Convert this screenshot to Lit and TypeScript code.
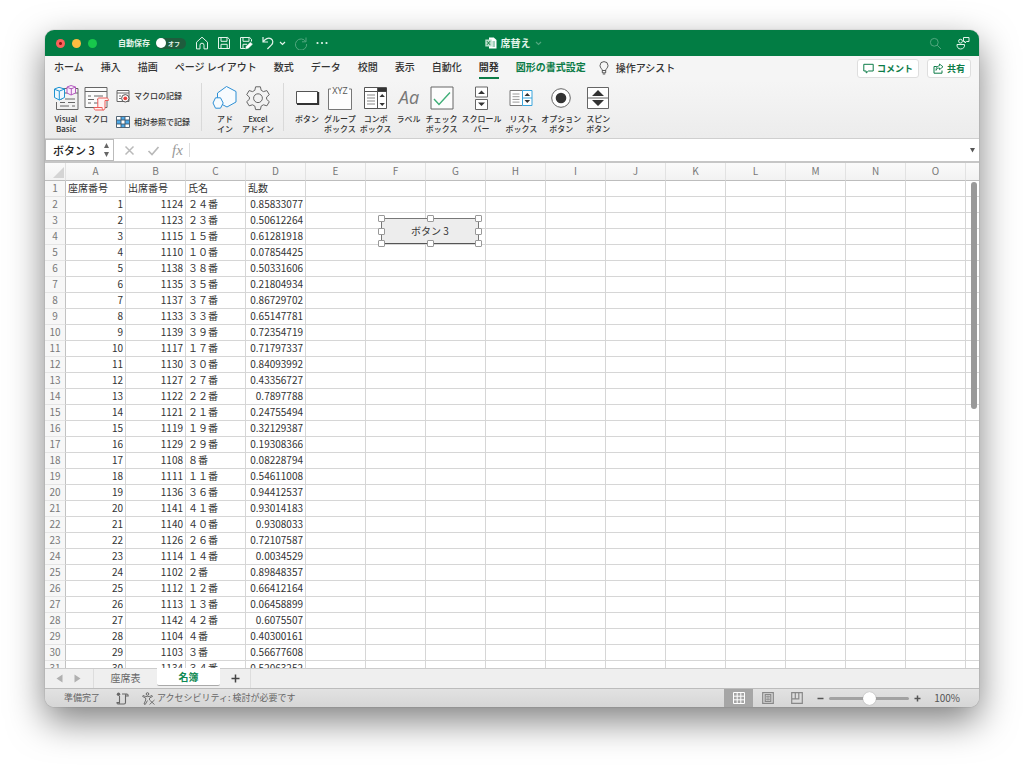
import { LitElement, html, css, svg, nothing } from "lit";
import { customElement, state } from "lit/decorators.js";
import { classMap } from "lit/directives/class-map.js";

const icon = (w: number, h: number, body: unknown) =>
  html`<svg class="icon" width=${w} height=${h} viewBox="0 0 ${w} ${h}" fill="none" stroke="currentColor" aria-hidden="true">${body}</svg>`;

const homeIcon = icon(14, 14, svg`<path d="M1.500 6.200 7 1.200l5.500 5V12.900H9V9.200a2 2 0 0 0-4 0v3.700H1.500Z" stroke-linejoin="round"/>`);
const saveIcon = icon(14, 14, svg`<path d="M1.500 1.500h9.200l1.800 1.800v9.200h-11ZM4 1.500v3.800h6V1.500M4 12.500V8.300h6.200v4.200"/>`);
const saveEditIcon = icon(14, 14, svg`<path d="M6 12.500H1.500v-11h9.200l1.800 1.800v2.200M4 1.500v3.800h6V1.500M4 12.500V8.300h4"/><path d="m6.500 13 .8-2.800 4.200-4 2 2-4.200 4Z" fill="#fff" stroke-width=".5"/>`);
const undoIcon = icon(14, 14, svg`<path d="M2 1v5h5M2.200 5.800C4 2.800 7.400 1.300 9.800 2.600c2.500 1.300 2.600 4.200.7 6.200L6.400 13" stroke-width="1.200"/>`);
const redoIcon = icon(14, 14, svg`<path d="M12 1.500v4.300H8M11.800 5.600A5.600 5.600 0 1 0 12.600 8"/>`);
const chevron = icon(7, 5, svg`<path d="m1 1 2.500 2.500L6 1" stroke-width="1.200"/>`);
const moreIcon = icon(12, 4, svg`<g fill="currentColor" stroke="none"><circle cx="1.500" cy="2" r="1.100"/><circle cx="6" cy="2" r="1.100"/><circle cx="10.500" cy="2" r="1.100"/></g>`);
const docIcon = icon(12, 12, svg`<path d="M4 .5h4.800L11.500 3v8.500H4Z" fill="#fff" stroke="none"/><path d="M7.500 5h2.500M7.500 7h2.500M7.500 9h2.500" stroke="#1a8a55" stroke-width=".8"/><rect x=".3" y="2.500" width="6.400" height="7" fill="#b9dfcb" stroke="none"/><path d="m2 4.200 3 3.600M5 4.200 2 7.800" stroke="#107c41"/>`);
const searchIcon = icon(13, 13, svg`<circle cx="5.300" cy="5.300" r="3.900"/><path d="m8.200 8.200 3.800 3.800"/>`);
const peopleIcon = icon(14, 14, svg`<circle cx="4.500" cy="5.200" r="1.900"/><path d="M1 8.500h7.500c.4 2.500-1.200 4.500-3.800 4.500S.800 11 1 8.500ZM7.500 1.500h5.500v4h-2.500L9 7V5.500H7.500Z" stroke-linejoin="round"/>`);
const bulbIcon = icon(10, 14, svg`<path d="M3.300 9.500C3.300 7.800 1 7 1 4.600a4 4 0 0 1 8 0C9 7 6.700 7.800 6.700 9.500ZM3.300 9.500v2.300h3.400V9.500M3.800 13h2.400" stroke-width=".8"/>`);
const commentIcon = icon(11, 11, svg`<path d="M.8 1.300h9.400v6.700H5.500L3.200 10V8H.8Z"/>`);
const shareIcon = icon(11, 11, svg`<path d="M3.800 3.500H1v6.700h8V7.500"/><path d="M6.500 1 10 3.800 6.500 6.600V5C4.800 5 3.700 5.800 3 7.400 3 4.600 4.400 2.900 6.500 2.700Z" stroke-linejoin="round" stroke-width=".9"/>`);

const vbIcon = icon(26, 26, svg`<path d="M7 3.500h18v21H3.500V17M12 8h13" stroke="#666"/><path d="M7 14h2m3 0h10M7 17.500h5m3 0h7M7 21h9m3 0h3" stroke="#666"/><path d="m14 2 4-1.500 4.500 1.500v6l-4.500 2-4-2ZM14 2.300l4.300 1.500L22.500 2M18.300 4v6" fill="#fbeefb" stroke="#b45bc0"/><path d="m1.500 4 4.500-1.700L11.500 4v8.500L6.300 15l-4.800-2.500ZM1.500 4.300l4.800 1.800 5.200-2M6.300 6.200V15" fill="#eef8fe" stroke="#1e93d2"/>`);
const macroIcon = icon(26, 26, svg`<path d="M2 2.500h22v20H2ZM2 6.500h22" fill="#fbfbfb" stroke="#666"/><path d="M5 11h3m3 0h9M5 14.500h6m3 0h3M5 18h3m3 0h4" stroke="#666"/><path d="M15.500 13h8.300c1.200 0 1.600.8 1.600 2.500H22v7.300c0 1.700-1 2.200-2 2.200h-7.500c-1 0-1.500-1-1.500-2.500h3.800v-7.800c0-1 .2-1.700.7-1.700ZM14.800 22.500h4.400c0 1.500.3 2.500 1.300 2.500" fill="#fff3f2" stroke="#ee5a57"/>`);
const recordIcon = icon(14, 14, svg`<path d="M1 1.500h12v11H1ZM1 4h12" fill="#fff" stroke="#666"/><path d="M3 7h2M3 9.500h2" stroke="#777"/><circle cx="9.300" cy="9.300" r="3.700" fill="#fff" stroke="#555"/><circle cx="9.300" cy="9.300" r="1.900" fill="#e8413d" stroke="none"/>`);
const relativeIcon = icon(14, 12, svg`<rect x=".5" y=".5" width="13" height="11" fill="#fff" stroke="none"/><path d="M5 1h4v3H5ZM1 4h4v4H1ZM9 4h4v4H9ZM5 8h4v3H5Z" fill="#4ba8e8" stroke="none"/><path d="M.5.500h13v11H.5ZM.5 4h13M.5 8h13M5 .5v11M9 .5v11" stroke="#3f5566" stroke-width=".9"/>`);
const addinIcon = icon(26, 26, svg`<g stroke="#2d8fd5" fill="#f7fbfe" stroke-linejoin="round"><path d="m14.500 1.500 9.500 5v10.500L15 22 5.500 17V8Z"/><path d="M8.500 12.800h-5L1 18l2.500 5.200h5L11.200 18Z"/></g>`);
const gearIcon = icon(26, 26, svg`<path d="m10.600 1.800h4.800l.8 3.500 2.200 1.300 3.500-1 2.400 4.100-2.700 2.400v2.200l2.700 2.400-2.400 4.100-3.500-1-2.200 1.300-.8 3.500h-4.800l-.8-3.500-2.200-1.300-3.500 1-2.400-4.100 2.700-2.400v-2.200L1.700 9.700l2.400-4.100 3.500 1 2.200-1.300Z" stroke="#666" stroke-linejoin="round"/><circle cx="13" cy="13.200" r="4.400" stroke="#666"/>`);
const buttonIcon = icon(26, 26, svg`<path d="M2.500 6.500h21v12h-21Z" fill="#fff" stroke="#555"/><path d="M3 19h21.200V7" stroke="#333" stroke-width="2"/>`);
const groupIcon = icon(26, 26, svg`<path d="M4 4H1.500v20.500h23V4H22" fill="#fdfdfd" stroke="#777"/><text x="13" y="8.500" text-anchor="middle" class="glyph">XYZ</text>`);
const comboIcon = icon(26, 26, svg`<path d="M1.500 2.500h22v21h-22ZM1.500 6.500h22M14.500 2.500v21" fill="#fff" stroke="#555"/><path d="M15 3h8.500v3.500H15Z" fill="#333" stroke="none"/><path d="M4 10h8M4 13h8M4 16h8M4 19h8" stroke="#888"/><path d="m16.500 12 2.700-3 2.700 3ZM16.500 18l2.700 3 2.700-3Z" fill="#333" stroke="none"/>`);
const labelIcon = icon(26, 26, svg`<text x="13" y="19" text-anchor="middle" class="glyph-label">Aa</text>`);
const checkIcon = icon(26, 26, svg`<path d="M2 2h22v22H2Z" fill="#fdfdfd" stroke="#666"/><path d="m5 14 5 5.500L21 7.500" stroke="#3fae77" stroke-width="1.400"/>`);
const scrollIcon = icon(26, 26, svg`<path d="M6.500 2h12v10h-12ZM6.500 14.500h12v10h-12Z" fill="#fff" stroke="#666"/><path d="m9 9 3.500-3.500L16 9ZM9 17.500l3.500 3.500 3.500-3.500Z" fill="#333" stroke="none"/>`);
const listIcon = icon(26, 26, svg`<path d="M2 5.500h12.500v15H2Z" fill="#fff" stroke="#777"/><path d="M4.500 9h7M4.500 11.700h7M4.500 14.400h7M4.500 17.100h7" stroke="#999"/><path d="M14.500 5.500h9.500v15h-9.500ZM14.500 13H24" fill="#fff" stroke="#3ba5dc"/><path d="m16.500 11 2.800-3 2.800 3ZM16.500 15l2.800 3 2.800-3Z" fill="#333" stroke="none"/>`);
const radioIcon = icon(26, 26, svg`<circle cx="13" cy="13" r="9.300" fill="#fff" stroke="#666"/><circle cx="13" cy="13" r="5.300" fill="#333" stroke="none"/>`);
const spinIcon = icon(26, 26, svg`<path d="M2.500 2.500h21v21h-21ZM2.500 13h21" fill="#fff" stroke="#666"/><path d="m7 11 6-6 6 6ZM7 15l6 6 6-6Z" fill="#333" stroke="none"/>`);

interface Tool { icon: unknown; lines: string[] }
const codeTools: Tool[] = [
  { icon: vbIcon, lines: ["Visual", "Basic"] },
  { icon: macroIcon, lines: ["マクロ"] },
];
const addinTools: Tool[] = [
  { icon: addinIcon, lines: ["アド", "イン"] },
  { icon: gearIcon, lines: ["Excel", "アドイン"] },
];
const controlTools: Tool[] = [
  { icon: buttonIcon, lines: ["ボタン"] },
  { icon: groupIcon, lines: ["グループ", "ボックス"] },
  { icon: comboIcon, lines: ["コンボ", "ボックス"] },
  { icon: labelIcon, lines: ["ラベル"] },
  { icon: checkIcon, lines: ["チェック", "ボックス"] },
  { icon: scrollIcon, lines: ["スクロール", "バー"] },
  { icon: listIcon, lines: ["リスト", "ボックス"] },
  { icon: radioIcon, lines: ["オプション", "ボタン"] },
  { icon: spinIcon, lines: ["スピン", "ボタン"] },
];

const ribbonTabs = ["ホーム", "挿入", "描画", "ページ レイアウト", "数式", "データ", "校閲", "表示", "自動化", "開発", "図形の書式設定"];
const columns = [..."ABCDEFGHIJKLMNO"];
const emptyColumns = columns.slice(4);

const roster: [number, string, string][] = [
  [1124, "２４番", "0.85833077"], [1123, "２３番", "0.50612264"], [1115, "１５番", "0.61281918"],
  [1110, "１０番", "0.07854425"], [1138, "３８番", "0.50331606"], [1135, "３５番", "0.21804934"],
  [1137, "３７番", "0.86729702"], [1133, "３３番", "0.65147781"], [1139, "３９番", "0.72354719"],
  [1117, "１７番", "0.71797337"], [1130, "３０番", "0.84093992"], [1127, "２７番", "0.43356727"],
  [1122, "２２番", "0.7897788"], [1121, "２１番", "0.24755494"], [1119, "１９番", "0.32129387"],
  [1129, "２９番", "0.19308366"], [1108, "８番", "0.08228794"], [1111, "１１番", "0.54611008"],
  [1136, "３６番", "0.94412537"], [1141, "４１番", "0.93014183"], [1140, "４０番", "0.9308033"],
  [1126, "２６番", "0.72107587"], [1114, "１４番", "0.0034529"], [1102, "２番", "0.89848357"],
  [1112, "１２番", "0.66412164"], [1113, "１３番", "0.06458899"], [1142, "４２番", "0.6075507"],
  [1104, "４番", "0.40300161"], [1103, "３番", "0.56677608"], [1134, "３４番", "0.52063252"],
];

@customElement("app-root")
export class AppRoot extends LitElement {
  @state() private activeTab = "開発";
  @state() private activeSheet = "名簿";

  static styles = css`
    :host {
      display: block;
      height: 100vh;
      box-sizing: border-box;
      padding: 30px 45px 59px;
      overflow: hidden;
      background: #fff;
      color: #333;
      font: 10px/16px "Noto Sans CJK JP", "Noto Sans", sans-serif;
    }
    * { box-sizing: border-box; }
    button, input {
      font: inherit;
      color: inherit;
      background: none;
      border: 0;
      padding: 0;
      margin: 0;
      border-radius: 0;
      white-space: nowrap;
    }
    .icon { display: block; flex: none; }
    .window {
      display: flex;
      flex-direction: column;
      height: 100%;
      border-radius: 9px;
      background: #f2f2f2;
      box-shadow: 0 0 1px rgba(0, 0, 0, 0.5), 0 14px 36px rgba(0, 0, 0, 0.5);
    }

    .titlebar {
      display: grid;
      grid-template-columns: 1fr auto 1fr;
      align-items: center;
      height: 26px;
      flex: none;
      padding: 0 9px 0 11px;
      border-radius: 9px 9px 0 0;
      background: #027d44;
      color: #e4f4eb;
    }
    .title-left, .title-mid, .title-right { display: flex; align-items: center; }
    .lights { display: flex; gap: 7px; margin-right: 21px; }
    .light { width: 9px; height: 9px; border-radius: 50%; background: #18c74c; }
    .light.close { background: radial-gradient(circle, #8c1511 0 1px, #fc605b 2px); }
    .light.min { background: #fdbc40; }
    .autosave { display: flex; align-items: center; gap: 6px; font-size: 8px; font-weight: 700; margin-right: 9px; }
    .switch {
      appearance: none;
      display: flex;
      align-items: center;
      width: 30px;
      height: 11px;
      border-radius: 6px;
      background: #1f5c3d;
      font-size: 6px;
      line-height: 11px;
    }
    .switch::before { content: ""; width: 10px; height: 10px; border-radius: 50%; background: #fff; }
    .switch::after { content: "オフ"; margin-left: 2px; }
    .quick { display: flex; align-items: center; gap: 8px; }
    .arrow { display: flex; align-items: center; gap: 4px; }
    .faded { opacity: 0.35; }
    .title-mid { gap: 4px; font-weight: 700; }
    .title-right { justify-content: flex-end; gap: 14px; }

    .tabs { display: flex; align-items: center; height: 25px; flex: none; padding: 0 8px 0 9px; background: #f5f5f5; }
    .tablist { display: flex; gap: 17px; margin-right: 13px; }
    .tab { height: 20px; padding-bottom: 1px; border-bottom: 2px solid transparent; font-weight: 500; }
    .tab.shape { color: #0c7c48; font-weight: 700; }
    .tab.active { border-color: #0c7c48; font-weight: 700; }
    .assist { display: flex; align-items: center; gap: 7px; height: 20px; padding-bottom: 1px; font-weight: 500; }
    .actions { display: flex; gap: 8px; margin-left: auto; }
    .action {
      display: flex;
      align-items: center;
      gap: 3px;
      height: 19px;
      padding: 0 5px;
      border: 1px solid #dedede;
      border-radius: 3px;
      background: #fff;
      color: #0c7c48;
      font-size: 9px;
      font-weight: 700;
    }

    .ribbon {
      display: flex;
      height: 58px;
      flex: none;
      padding: 2px 8px 0;
      background: linear-gradient(#f5f5f5, #ececec);
      border-bottom: 1px solid #cfcfcf;
      font-size: 8px;
      line-height: 10px;
    }
    .group { display: flex; align-items: flex-start; gap: 4px; padding-top: 2px; }
    .group.code { padding-right: 11px; }
    .group.addins { padding: 2px 9px 0 10px; }
    .group.controls { padding-left: 10px; }
    .rule { width: 1px; height: 48px; background: #d9d9d9; }
    .tool { display: flex; flex-direction: column; align-items: center; min-width: 26px; font-weight: 500; }
    .tool .icon { margin-bottom: 3px; }
    .stack { display: flex; flex-direction: column; gap: 12px; padding: 4px 0 0 3px; }
    .small { display: flex; align-items: center; gap: 4px; height: 14px; font-weight: 500; }
    .glyph { font: 9px "Open Sans", sans-serif; fill: #555; stroke: none; }
    .glyph-label { font: italic 18px "Open Sans", sans-serif; fill: #777; stroke: none; }

    .formula { display: flex; align-items: center; height: 24px; flex: none; background: #fff; border-bottom: 2px solid #c6c6c6; }
    .namebox { display: flex; align-items: center; width: 69px; height: 22px; border: 1px solid #bbb; padding: 0 3px 0 7px; }
    .name { flex: 1; min-width: 0; font-size: 11px; font-weight: 500; color: #222; }
    .marks { display: flex; align-items: center; gap: 12px; padding: 0 6px 0 10px; color: #b9b9b9; }
    .fx { font: italic 15px "Liberation Serif", serif; color: #999; }
    .expression { flex: 1; min-width: 0; height: 14px; border-left: 1px solid #ddd; }
    .expand { padding: 0 3px; }

    .sheet { position: relative; flex: 1; min-height: 0; overflow: hidden; background: #fff; }
    table { width: 100%; table-layout: fixed; border-collapse: separate; border-spacing: 0; }
    .col-index { width: 21px; }
    .col { width: 60px; }
    th, td {
      height: 16px;
      padding: 0 2px 1px;
      border: solid #d6d6d6;
      border-width: 0 1px 1px 0;
      line-height: 14px;
      font-weight: 400;
      text-align: left;
      vertical-align: top;
      white-space: nowrap;
      overflow: hidden;
    }
    thead th { height: 18px; padding: 1px 2px 2px; background: linear-gradient(#fafafa, #f2f2f2); border-bottom-color: #bdbdbd; border-right-color: #e2e2e2; color: #777; text-align: center; }
    tbody th { padding: 0 0 1px; background: #f7f7f7; border-right-color: #c2c2c2; border-bottom-color: #e4e4e4; color: #777; text-align: center; }
    thead .corner { padding: 0; }
    .corner .icon { margin: 3px 0 0 auto; }
    .num { text-align: right; }
    th:last-child, td:last-child { border-right: 0; }

    .shape-button { position: absolute; left: 336px; top: 55px; width: 98px; height: 26px; }
    .face { width: 100%; height: 100%; border: 1px solid #777; border-bottom-color: #555; background: #ededed; text-align: center; }
    .handles { position: absolute; inset: -3px; display: grid; grid-template-columns: repeat(3, 7px); justify-content: space-between; align-content: space-between; pointer-events: none; }
    .handle { width: 7px; height: 7px; border: 1px solid #999; border-radius: 1px; background: #fff; }
    .gap { visibility: hidden; }
    .scroll-thumb { position: absolute; right: 2px; top: 19px; width: 6px; height: 227px; border-radius: 3px; background: #999; }

    .sheets { position: relative; display: flex; height: 20px; flex: none; border-top: 1px solid #ccc; background: #efefef; color: #666; }
    .nav { display: flex; align-items: center; gap: 11px; width: 49px; padding-left: 11px; border-right: 1px solid #ddd; }
    .sheet-tab { width: 63px; padding-bottom: 2px; }
    .sheet-tab.current { height: 18px; margin-top: -1px; padding-bottom: 0; background: #fff; border-bottom: 1px solid #aaa; border-radius: 0 0 2px 2px; color: #0f8a54; font-weight: 700; }
    .add { width: 31px; border-right: 1px solid #ddd; display: flex; align-items: center; justify-content: center; color: #444; }

    .status {
      display: flex;
      align-items: center;
      height: 19px;
      flex: none;
      padding: 0 19px;
      border-top: 1px solid #bcbcbc;
      border-radius: 0 0 9px 9px;
      background: linear-gradient(#e2e2e2, #d6d6d6);
      color: #666;
      font-size: 9px;
    }
    .ready { margin-right: 16px; }
    .a11y { display: flex; align-items: center; gap: 2px; margin-left: 13px; }
    .views { display: flex; margin-left: auto; height: 18px; }
    .view { display: flex; align-items: center; justify-content: center; width: 29px; color: #888; }
    .view.on { background: #a6a6a6; color: #fff; }
    .zoom { display: flex; align-items: center; gap: 5px; margin-left: 6px; color: #555; }
    .slider { appearance: none; width: 80px; height: 13px; }
    .slider::-webkit-slider-runnable-track { height: 3px; border-radius: 2px; background: #a2a2a2; }
    .slider::-webkit-slider-thumb { appearance: none; width: 13px; height: 13px; margin-top: -5px; border-radius: 50%; background: #fff; box-shadow: 0 0 1px #888; }
    .percent { margin-left: 8px; font-size: 10px; }
  `;

  private tool(t: Tool) {
    return html`<button class="tool">${t.icon}${t.lines.map((l) => html`<span>${l}</span>`)}</button>`;
  }

  private row(cells: unknown, index: number) {
    return html`<tr><th scope="row">${index}</th>${cells}${emptyColumns.map(() => html`<td></td>`)}<td></td></tr>`;
  }

  render() {
    return html`
      <main class="window">
        <header class="titlebar">
          <div class="title-left">
            <div class="lights">
              <button class="light close" aria-label="閉じる"></button>
              <button class="light min" aria-label="しまう"></button>
              <button class="light" aria-label="拡大"></button>
            </div>
            <label class="autosave">自動保存<input class="switch" type="checkbox" role="switch" /></label>
            <div class="quick">
              <button aria-label="ホーム">${homeIcon}</button>
              <button aria-label="保存">${saveIcon}</button>
              <button aria-label="別名で保存">${saveEditIcon}</button>
              <button class="arrow" aria-label="元に戻す">${undoIcon}${chevron}</button>
              <button class="faded" aria-label="やり直し">${redoIcon}</button>
              <button aria-label="その他">${moreIcon}</button>
            </div>
          </div>
          <div class="title-mid">${docIcon}<span>席替え</span><span class="faded">${chevron}</span></div>
          <div class="title-right">
            <button class="faded" aria-label="検索">${searchIcon}</button>
            <button aria-label="共同編集">${peopleIcon}</button>
          </div>
        </header>

        <nav class="tabs">
          <div class="tablist" role="tablist">
            ${ribbonTabs.map((t, i) => html`<button role="tab" aria-selected=${t === this.activeTab}
              class=${classMap({ tab: true, active: t === this.activeTab, shape: i === ribbonTabs.length - 1 })}
              @click=${() => (this.activeTab = t)}>${t}</button>`)}
          </div>
          <button class="assist">${bulbIcon}操作アシスト</button>
          <div class="actions">
            <button class="action">${commentIcon}コメント</button>
            <button class="action">${shareIcon}共有</button>
          </div>
        </nav>

        <section class="ribbon">
          <div class="group code">
            ${codeTools.map((t) => this.tool(t))}
            <div class="stack">
              <button class="small">${recordIcon}マクロの記録</button>
              <button class="small">${relativeIcon}相対参照で記録</button>
            </div>
          </div>
          <div class="rule"></div>
          <div class="group addins">${addinTools.map((t) => this.tool(t))}</div>
          <div class="rule"></div>
          <div class="group controls">${controlTools.map((t) => this.tool(t))}</div>
        </section>

        <section class="formula">
          <div class="namebox">
            <input class="name" aria-label="名前ボックス" value="ボタン 3" />
            ${icon(7, 16, svg`<path d="m1 6 2.500-5L6 6ZM1 10l2.500 5L6 10Z" fill="#666" stroke="none"/>`)}
          </div>
          <div class="marks">
            <button aria-label="キャンセル">${icon(11, 11, svg`<path d="m1.500 1.500 8 8m0-8-8 8" stroke-width="1.500"/>`)}</button>
            <button aria-label="入力">${icon(13, 11, svg`<path d="m1.500 6 3.500 3.500 6.500-7.500" stroke-width="1.700"/>`)}</button>
            <button class="fx">fx</button>
          </div>
          <input class="expression" aria-label="数式バー" />
          <button class="expand" aria-label="展開">${icon(7, 6, svg`<path d="M1 1h5L3.500 5.500Z" fill="#555" stroke="none"/>`)}</button>
        </section>

        <section class="sheet">
          <table>
            <colgroup><col class="col-index" />${columns.map(() => html`<col class="col" />`)}<col /></colgroup>
            <thead>
              <tr>
                <th class="corner">${icon(13, 13, svg`<path d="M12 1v11H1Z" fill="#d4d4d4" stroke="none"/>`)}</th>
                ${columns.map((c) => html`<th scope="col">${c}</th>`)}<th></th>
              </tr>
            </thead>
            <tbody>
              ${this.row(["座席番号", "出席番号", "氏名", "乱数"].map((c) => html`<td>${c}</td>`), 1)}
              ${roster.map(([id, name, rand], i) => this.row(
                html`<td class="num">${i + 1}</td><td class="num">${id}</td><td>${name}</td><td class="num">${rand}</td>`, i + 2))}
            </tbody>
          </table>
          <div class="shape-button">
            <button class="face">ボタン 3</button>
            <div class="handles">
              ${Array.from({ length: 9 }, (_, i) => html`<span class=${classMap({ handle: true, gap: i === 4 })}></span>`)}
            </div>
          </div>
          <div class="scroll-thumb"></div>
        </section>

        <nav class="sheets">
          <div class="nav">
            <button aria-label="前のシート">${icon(7, 9, svg`<path d="M6.500.5v8L.5 4.500Z" fill="#b0b0b0" stroke="none"/>`)}</button>
            <button aria-label="次のシート">${icon(7, 9, svg`<path d="M.5.500v8l6-4Z" fill="#b0b0b0" stroke="none"/>`)}</button>
          </div>
          ${["座席表", "名簿"].map((s) => html`<button
            class=${classMap({ "sheet-tab": true, current: s === this.activeSheet })}
            aria-current=${s === this.activeSheet ? "page" : nothing}
            @click=${() => (this.activeSheet = s)}>${s}</button>`)}
          <button class="add" aria-label="シートの追加">${icon(9, 9, svg`<path d="M4.500.500v8M.5 4.500h8" stroke-width="1.500"/>`)}</button>
        </nav>

        <footer class="status">
          <span class="ready">準備完了</span>
          ${icon(13, 13, svg`<path d="M3.500 4v6.500c0 1-.5 1.500-1.500 1.500h6c1 0 1.500-.5 1.500-1.500v-7c0-1 .5-1.500 1.500-1.500H6M11 2c1 0 1.200.7 1.200 2H9.500M2 12c-.8 0-1-.6-1-1.500h2.500" stroke-width="1.100"/><circle cx="2.500" cy="2.300" r="1.700" fill="currentColor" stroke="none"/>`)}
          <button class="a11y">
            ${icon(13, 13, svg`<circle cx="5.500" cy="2" r="1.300"/><path d="M1 3.500c2.500 1.500 6.500 1.500 9 0l.5 1L7.500 6v2M1 3.500l-.4 1L3.700 6v2L2 12l1.200.5L5.500 8.500M7.500 8l5 4.500M12.500 8l-5 4.500" stroke-width=".9"/>`)}
            アクセシビリティ: 検討が必要です
          </button>
          <div class="views">
            <button class="view on" aria-label="標準">${icon(12, 12, svg`<path d="M.5.500h11v11H.5ZM.5 4.200h11M.5 7.800h11M4.200.500v11M7.800.500v11"/>`)}</button>
            <button class="view" aria-label="ページ レイアウト">${icon(12, 12, svg`<path d="M.7.700h10.600v10.600H.7ZM3.200 2.700h5.600v6.600H3.200Z" stroke-width="1.200"/><path d="M4 4.500h4M4 6h4M4 7.500h4M6 3.500v5" stroke-width=".7"/>`)}</button>
            <button class="view" aria-label="改ページ">${icon(12, 12, svg`<path d="M.7.700h10.600v10.600H.7ZM1 6.800h6.800V1M4.300 1v5.500" stroke-width="1.200"/>`)}</button>
          </div>
          <div class="zoom">
            <button aria-label="縮小">${icon(7, 7, svg`<path d="M.5 3.500h6" stroke-width="1.500"/>`)}</button>
            <input class="slider" type="range" min="0" max="200" value="100" aria-label="ズーム" />
            <button aria-label="拡大表示">${icon(7, 7, svg`<path d="M.5 3.500h6M3.500.500v6" stroke-width="1.500"/>`)}</button>
            <span class="percent">100%</span>
          </div>
        </footer>
      </main>
    `;
  }
}
